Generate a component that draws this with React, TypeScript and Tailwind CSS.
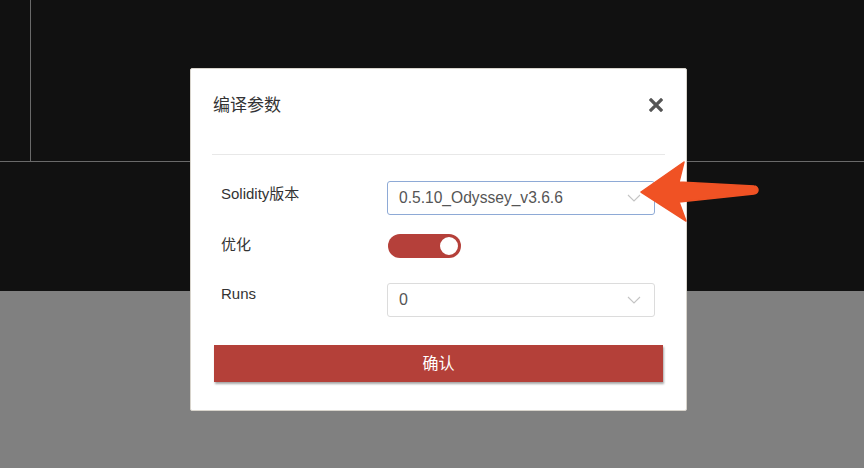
import React from 'react';

const font = { fontFamily: '"Liberation Sans", "Noto Sans CJK SC", sans-serif' };

const Chevron: React.FC = () => (
  <svg width="14" height="8" viewBox="0 0 14 8" className="shrink-0">
    <polyline points="1,1 7,7 13,1" fill="none" stroke="#c4c4c4" strokeWidth="1.1" />
  </svg>
);

const App: React.FC = () => {
  return (
    <div className="relative w-[864px] h-[468px] overflow-hidden flex flex-col" style={font}>
      {/* background page */}
      <div className="h-[291px] bg-[#111111] flex flex-col">
        <div className="h-[162px] border-b border-[#6a6a6a] flex">
          <div className="w-[31px] h-full border-r border-[#6a6a6a]" />
        </div>
      </div>
      <div className="flex-1 bg-[#808080]" />

      {/* modal */}
      <div className="absolute left-[190px] top-[68px] w-[497px] h-[343px] bg-white border border-[#d8d4cc] rounded-[2px] flex flex-col">
        <div className="flex items-center justify-between pl-[22px] pr-[23px] pt-[24px] h-[50px]">
          <h2 className="text-[17px] text-[#333] leading-6">编译参数</h2>
          <svg width="14" height="14" viewBox="0 0 14 14" className="-mt-[2px]">
            <path d="M2 2 L12 12 M12 2 L2 12" stroke="#555" strokeWidth="3.2" strokeLinecap="square" />
          </svg>
        </div>
        <div className="mx-[21px] mt-[35px] border-t border-[#e8e8e8]" />

        <div className="mt-[26px] pl-[30px] grid grid-cols-[166px_268px]">
          <div className="pt-[3px] text-[15px] text-[#333] leading-5">Solidity版本</div>
          <div className="h-[34px] border border-[#8eaad6] rounded-[3px] flex items-center justify-between pl-[11px] pr-[13px]">
            <span className="text-[15.6px] text-[#555]">0.5.10_Odyssey_v3.6.6</span>
            <Chevron />
          </div>

          <div className="mt-[19px] pt-[1px] text-[15px] text-[#333] leading-5">优化</div>
          <div className="mt-[19px] pl-[1px]">
            <div className="w-[73px] h-[24px] rounded-full bg-[#b5403a] flex items-center justify-end pr-[1px]">
              <div className="w-[22px] h-[22px] rounded-full bg-white border-2 border-[#b5403a]" />
            </div>
          </div>

          <div className="mt-[25px] pt-[1px] text-[15px] text-[#333] leading-5">Runs</div>
          <div className="mt-[25px] h-[34px] border border-[#dcdcdc] rounded-[3px] flex items-center justify-between pl-[11px] pr-[13px]">
            <span className="text-[16px] text-[#555]">0</span>
            <Chevron />
          </div>
        </div>

        <div className="mt-[28px] mx-[23px]">
          <button className="w-[449px] h-[37px] bg-[#b44039] text-white text-[16px] shadow-[1px_2px_2px_rgba(0,0,0,0.35)]">
            确认
          </button>
        </div>
      </div>

      {/* annotation arrow */}
      <svg className="absolute left-0 top-0 pointer-events-none" width="864" height="468">
        <path
          d="M641 192 L684 162 L679 182 L754 186 A4 4 0 0 1 754 194 L679 202 L686 221 Z"
          fill="#f05224"
          stroke="#f05224"
          strokeWidth="1.5"
          strokeLinejoin="round"
        />
      </svg>
    </div>
  );
};

export default App;
